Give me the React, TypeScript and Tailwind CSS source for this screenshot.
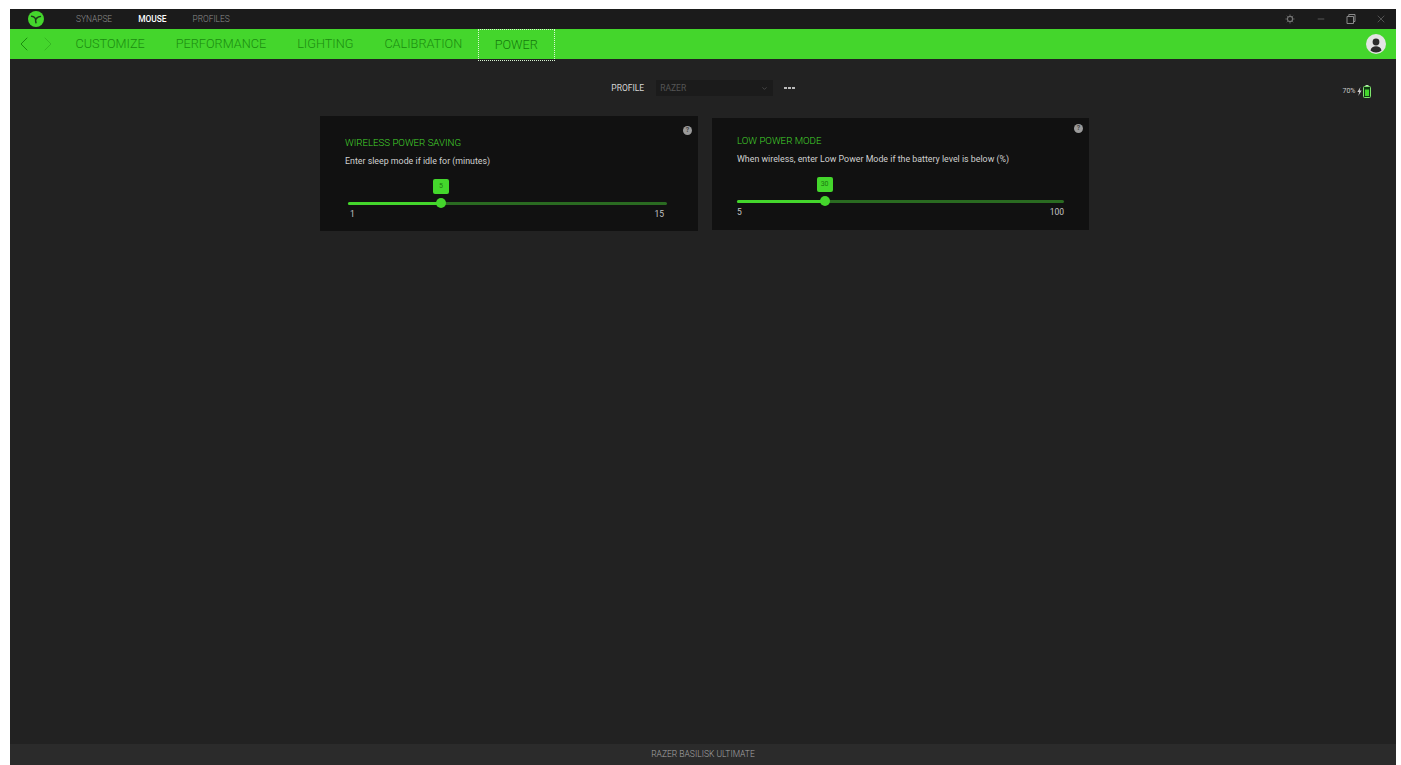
import { Minus, X, ChevronLeft, ChevronRight, ChevronDown } from "lucide-react";

type PowerCardProps = {
  title: string;
  desc: string;
  value: string;
  min: string;
  max: string;
  percent: number;
  className: string;
  helpClass: string;
  sliderClass: string;
  labelClass: string;
};

function PowerCard({ title, desc, value, min, max, percent, className, helpClass, sliderClass, labelClass }: PowerCardProps) {
  return (
    <div className={`relative flex flex-col bg-[#111111] ${className}`}>
      <div className={`absolute flex h-[9px] w-[9px] items-center justify-center rounded-full bg-[#9b9b9b] text-[7px] leading-none font-bold text-[#444] ${helpClass}`}>
        ?
      </div>
      <div className="text-[9.7px] leading-[12px] font-light text-[#44d62c]">{title}</div>
      <div className="mt-[6px] text-[8.83px] leading-[12px] text-[#d0d0d0]">{desc}</div>
      <div className={sliderClass}>
        <div className="relative mt-[34.5px] h-[3px] rounded-full bg-[#2a6b21]">
          <div className="h-full rounded-full bg-[#44d62c]" style={{ width: `${percent}%` }} />
          <div
            className="absolute top-[-3.5px] h-[10px] w-[10px] -translate-x-1/2 rounded-full bg-[#44d62c]"
            style={{ left: `${percent}%` }}
          />
          <div
            className="absolute top-[-22.5px] flex h-[14.5px] w-[16px] -translate-x-1/2 items-center justify-center rounded-[2px] bg-[#44d62c] text-[7px] text-[#1b7a10]"
            style={{ left: `${percent}%` }}
          >
            {value}
          </div>
        </div>
        <div className={`mt-[4px] flex justify-between text-[8.5px] leading-[10px] text-[#c4c4c4] ${labelClass}`}>
          <span>{min}</span>
          <span>{max}</span>
        </div>
      </div>
    </div>
  );
}

function Logo() {
  return (
    <svg width="16" height="16" viewBox="0 0 16 16">
      <circle cx="8" cy="8" r="8" fill="#44d62c" />
      <path
        d="M3.6 5.2c1.2.1 2.9.9 3.7 2.2.3.5.3 1 .3 1.6 0 1 .1 1.8.4 2.8M12.4 5.4c-1 0-2.4.5-3.4 1.5-.5.5-1 1.2-1.4 2.1"
        fill="none"
        stroke="#1d3a1c"
        strokeWidth="1.5"
        strokeLinecap="round"
      />
    </svg>
  );
}

function Gear() {
  return (
    <svg width="10" height="10" viewBox="0 0 10 10" fill="none" stroke="#747474">
      <circle cx="5" cy="5" r="2.6" strokeWidth="1.2" />
      <path d="M5 .5v1.2M5 8.3v1.2M.5 5h1.2M8.3 5h1.2M1.8 1.8l.9.9M7.3 7.3l.9.9M8.2 1.8l-.9.9M2.7 7.3l-.9.9" strokeWidth="0.9" />
    </svg>
  );
}

function Restore() {
  return (
    <svg width="10" height="10" viewBox="0 0 10 10" fill="none" stroke="#8a8a8a" strokeWidth="1">
      <path d="M1 2.5h6.5v7H1z" />
      <path d="M2.8 2.5V.5H9v7H7.5" />
    </svg>
  );
}

function Avatar() {
  return (
    <svg width="20" height="20" viewBox="0 0 20 20">
      <circle cx="10" cy="10" r="10" fill="#e4e4e4" />
      <circle cx="10" cy="8" r="3.4" fill="#2c2c2c" />
      <path d="M4.5 16.5c.5-3 2.8-4.3 5.5-4.3s5 1.3 5.5 4.3c-1.4 1.2-3.4 2-5.5 2s-4.1-.8-5.5-2z" fill="#2c2c2c" />
    </svg>
  );
}

function Bolt() {
  return (
    <svg width="5" height="9" viewBox="0 0 5 9">
      <path d="M3.4 0L.4 5h1.8L1.3 9l3.3-5.4H2.7z" fill="#d0d0d0" />
    </svg>
  );
}

function Battery() {
  return (
    <svg width="8" height="13" viewBox="0 0 8 13">
      <path d="M2.5 0h3v1.5h-3z" fill="#bfe8b8" />
      <rect x="0.5" y="1.5" width="7" height="11" rx="1" fill="#0f3a12" stroke="#7fe56e" />
      <rect x="2" y="4.5" width="4" height="6.5" fill="#44d62c" />
    </svg>
  );
}

export default function App() {
  return (
    <div className="h-[765px] w-[1401px] overflow-hidden bg-white pt-[9px] pr-[5px] pl-[10px] font-['Roboto',sans-serif]">
      <div className="flex h-full flex-col bg-[#222222]">
        {/* top bar */}
        <div className="flex h-[20px] shrink-0 items-center bg-[#1b1b1b]">
          <div className="flex w-[51px] justify-center">
            <Logo />
          </div>
          <div className="ml-[15px] flex gap-[26px] text-[8.4px] font-light">
            <span className="text-[#8d8d8d]">SYNAPSE</span>
            <span className="font-medium text-white">MOUSE</span>
            <span className="text-[#8d8d8d]">PROFILES</span>
          </div>
          <div className="ml-auto flex items-center text-[#8a8a8a]">
            <Gear />
            <Minus size={10} strokeWidth={1.3} className="mr-[20px] ml-[21px]" />
            <Restore />
            <X size={12} strokeWidth={1} className="mr-[9px] ml-[19px]" />
          </div>
        </div>

        {/* green nav */}
        <div className="flex h-[30px] shrink-0 items-center bg-[#44d62c] pr-[10px]">
          <div className="flex w-[50px] shrink-0 items-center pl-[1.5px] text-[#1b8c10]">
            <ChevronLeft size={24} strokeWidth={1} />
            <ChevronRight size={24} strokeWidth={1} className="text-[#35b822]" />
          </div>
          <div className="flex h-full items-center text-[12.7px] font-light text-[#1b8c10]">
            <div className="px-[15.5px]">CUSTOMIZE</div>
            <div className="px-[15.5px]">PERFORMANCE</div>
            <div className="px-[15.5px]">LIGHTING</div>
            <div className="px-[15.5px]">CALIBRATION</div>
            <div className="flex h-[32px] items-center self-start border border-dotted border-[#d8f5d2] px-[16px] text-[#157a0c]">
              POWER
            </div>
          </div>
          <div className="ml-auto">
            <Avatar />
          </div>
        </div>

        {/* main content */}
        <div className="relative flex min-h-0 flex-1 flex-col items-center">
          <div className="mt-[21px] flex h-[16px] items-center">
            <span className="mr-[12px] pt-[1px] text-[8.5px] text-[#d6d6d6]">PROFILE</span>
            <div className="flex h-[16px] w-[117px] items-center justify-between bg-[#1b1b1b] pr-[5.5px] pl-[4px] text-[8.5px] text-[#555555]">
              <span>RAZER</span>
              <ChevronDown size={7} className="text-[#666666]" />
            </div>
            <div className="ml-[11px] flex gap-[1.5px]">
              <span className="h-[2.5px] w-[2.5px] bg-[#bbbbbb]" />
              <span className="h-[2.5px] w-[2.5px] bg-[#bbbbbb]" />
              <span className="h-[2.5px] w-[2.5px] bg-[#bbbbbb]" />
            </div>
          </div>

          <div className="absolute top-[26px] right-[25px] flex items-center">
            <span className="text-[7px] text-[#c8c8c8]">70%</span>
            <span className="mr-[1.5px] ml-[1px]">
              <Bolt />
            </span>
            <Battery />
          </div>

          <div className="mt-[20px] flex items-start gap-[14px] pl-[3px]">
            <PowerCard
              title="WIRELESS POWER SAVING"
              desc="Enter sleep mode if idle for (minutes)"
              value="5"
              min="1"
              max="15"
              percent={29.15}
              className="h-[115px] w-[378px] pt-[21px] pr-[31px] pl-[25px]"
              helpClass="top-[9.5px] right-[6px]"
              sliderClass="ml-[3px]"
              labelClass="pr-[3px] pl-[2px]"
            />
            <PowerCard
              title="LOW POWER MODE"
              desc="When wireless, enter Low Power Mode if the battery level is below (%)"
              value="30"
              min="5"
              max="100"
              percent={26.8}
              className="mt-[2px] h-[112px] w-[377px] pt-[17px] pr-[25px] pl-[25px]"
              helpClass="top-[6px] right-[6px]"
              sliderClass=""
              labelClass=""
            />
          </div>
        </div>

        {/* footer */}
        <div className="flex h-[21px] shrink-0 items-center justify-center bg-[#2b2b2b] text-[8.5px] font-light text-[#a5a5a5]">
          RAZER BASILISK ULTIMATE
        </div>
      </div>
    </div>
  );
}
